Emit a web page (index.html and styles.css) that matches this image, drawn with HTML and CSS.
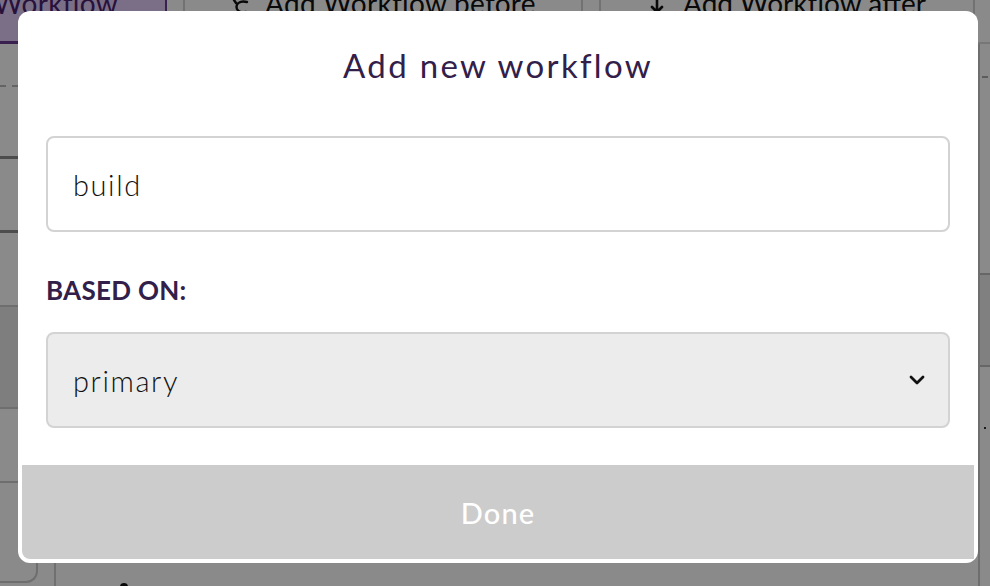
FILE: index.html
```html
<!DOCTYPE html>
<html lang="en">
<head>
<meta charset="utf-8">
<title>Add new workflow</title>
<link rel="stylesheet" href="styles.css">
</head>
<body>
<div class="page">
  <header class="toolbar">
    <div class="tab"><span class="tab-label">Workflow</span></div>
    <div class="spacer"></div>
    <div class="tool tool-before">
      <svg class="tool-icon" width="20" height="16" viewBox="0 0 20 16"><path d="M3 0 L5 3 M16 2 C9 0 4 4 6 9 C7.5 12 11 13 15 12" fill="none" stroke="#111" stroke-width="2.4" stroke-linecap="round"/></svg>
      <span class="tool-label">Add Workflow before</span>
    </div>
    <div class="tool tool-after">
      <svg class="tool-arrow" width="16" height="14" viewBox="0 0 16 14"><path d="M8 -4 L8 12 M3 7 L8 12 L13 7" fill="none" stroke="#111" stroke-width="2.6" stroke-linecap="round" stroke-linejoin="round"/></svg>
      <span class="tool-label">Add Workflow after</span>
    </div>
    <div class="rest"></div>
  </header>
  <div class="content">
    <aside class="side">
      <div class="row row-a"><span class="dash"></span></div>
      <div class="row row-b"></div>
      <div class="row row-c"></div>
      <div class="row row-d"></div>
      <div class="row row-e"></div>
      <div class="row row-f"></div>
      <div class="row row-g"><div class="card-corner"></div></div>
    </aside>
    <main class="main">
      <div class="main-foot"><span class="dot"></span></div>
    </main>
    <aside class="rside">
      <div class="r-row r-a"><span class="r-dash"></span></div>
      <div class="r-row r-b"></div>
      <div class="r-row r-c"></div>
      <div class="r-row r-d"><span class="r-dot"></span></div>
    </aside>
  </div>
</div>

<div class="overlay"></div>

<div class="modal" role="dialog" aria-labelledby="modal-title">
  <div class="modal-body">
    <h2 class="modal-title" id="modal-title">Add new workflow</h2>
    <input class="field" type="text" value="build" aria-label="Workflow name">
    <div class="field-label">BASED ON:</div>
    <div class="select" role="combobox" aria-expanded="false">
      <span class="select-value">primary</span>
      <svg class="chevron" width="16" height="12" viewBox="0 0 16 12"><path d="M2 3 L8 9 L14 3" fill="none" stroke="#111" stroke-width="2.8" stroke-linecap="round" stroke-linejoin="round"/></svg>
    </div>
  </div>
  <button class="done" type="button">Done</button>
</div>
</body>
</html>
```

FILE: styles.css
```css
* { box-sizing: border-box; }

html, body {
  margin: 0;
  height: 100%;
  overflow: hidden;
}

body {
  font-family: Lato, "Open Sans", "Liberation Sans", sans-serif;
  background: #ffffff;
  color: #111;
}

/* ---------- background page ---------- */
.page {
  display: flex;
  flex-direction: column;
  height: 100%;
}

.toolbar {
  display: flex;
  height: 44px;
  flex: none;
}

.tab {
  width: 167px;
  background: #e4cdfa;
  border-right: 2px solid #6a3b92;
  border-bottom: 3px solid #6a3b92;
  display: flex;
  justify-content: flex-end;
  padding-right: 47px;
  overflow: hidden;
}

.tab-label, .tool-label {
  font-size: 28px;
  line-height: 28px;
  margin-top: -11px;
  white-space: nowrap;
  letter-spacing: 0.3px;
}

.tab-label { color: #4a2270; }

.spacer {
  width: 16px;
  border-bottom: 2px solid #dddddd;
}

.tool {
  display: flex;
  gap: 14px;
  border-left: 2px solid #d2d2d2;
  border-right: 2px solid #d2d2d2;
  border-bottom: 2px solid #dddddd;
  overflow: hidden;
}

.tool-before {
  width: 400px;
  padding-left: 46px;
}

.tool-icon { flex: none; }

.tool-after {
  width: 376px;
  margin-left: 16px;
  padding-left: 48px;
  gap: 18px;
}

.tool-after .tool-label { letter-spacing: 0; }

.tool-arrow { flex: none; }

.rest {
  flex: 1;
  border-bottom: 2px solid #dddddd;
}

.content {
  flex: 1;
  display: flex;
}

.side {
  width: 56px;
  display: flex;
  flex-direction: column;
  border-right: 2px solid #cfcfcf;
}

.row { flex: none; }
.row-a { height: 43px; position: relative; }
.row-a .dash {
  position: absolute;
  left: 0; bottom: 0;
  width: 18px;
  border-bottom: 2px dashed #b9b9b9;
}
.row-b { height: 72px; border-bottom: 3px solid #8f8f8f; }
.row-c { height: 74px; border-bottom: 3px solid #8f8f8f; }
.row-d { height: 74px; border-bottom: 2px solid #cccccc; }
.row-e { height: 102px; background: #e9e9e9; border-bottom: 2px solid #cccccc; }
.row-f { height: 74px; border-bottom: 2px solid #cccccc; }
.row-g { flex: 1; }
.card-corner {
  width: 38px;
  height: 100px;
  border-right: 2px solid #cccccc;
  border-bottom: 2px solid #cccccc;
  border-bottom-right-radius: 12px;
}

.main {
  flex: 1;
  display: flex;
  flex-direction: column;
  justify-content: flex-end;
}

.main-foot { padding-left: 64px; height: 3px; }
.dot {
  display: block;
  width: 8px; height: 8px;
  border-radius: 50%;
  background: #111;
}

.rside {
  width: 12px;
  display: flex;
  flex-direction: column;
  border-left: 2px solid #cccccc;
}
.r-row { flex: none; }
.r-a { height: 229px; padding-top: 32px; padding-left: 2px; }
.r-dash { display: block; width: 6px; border-top: 2px solid #aaa; }
.r-b { height: 2px; background: #bdbdbd; }
.r-c { height: 92px; background: #ececec; border-bottom: 2px solid #bdbdbd; }
.r-d { padding-top: 60px; padding-left: 4px; }
.r-dot { display: block; width: 2px; height: 2px; background: #333; }

/* ---------- overlay ---------- */
.overlay {
  position: fixed;
  inset: 0;
  background: rgba(0, 0, 0, 0.46);
}

/* ---------- modal ---------- */
.modal {
  position: fixed;
  left: 18px;
  top: 11px;
  width: 960px;
  background: #ffffff;
  border-radius: 12px;
  padding: 0 4px 4px;
  display: flex;
  flex-direction: column;
}

.modal-body {
  padding: 34px 24px 37px;
  display: flex;
  flex-direction: column;
}

.modal-title {
  margin: 0 0 51px;
  text-align: center;
  font-size: 33px;
  line-height: 40px;
  font-weight: 400;
  letter-spacing: 2.3px;
  color: #32204a;
}

.field {
  display: block;
  width: 100%;
  height: 96px;
  border: 2px solid #d3d3d3;
  border-radius: 8px;
  padding: 0 25px;
  font-family: Lato, "Open Sans", "Liberation Sans", sans-serif;
  font-size: 29px;
  font-weight: 300;
  letter-spacing: 1.6px;
  color: #111;
  background: #fff;
  outline: none;
}

.field-label {
  margin-top: 42px;
  font-size: 26px;
  line-height: 32px;
  font-weight: 700;
  color: #32204a;
  letter-spacing: 0.3px;
}

.select {
  margin-top: 26px;
  height: 96px;
  border: 2px solid #d3d3d3;
  border-radius: 8px;
  background: #ececec;
  padding: 0 25px;
  display: flex;
  align-items: center;
  justify-content: space-between;
}

.select-value {
  font-size: 29px;
  font-weight: 300;
  letter-spacing: 1.6px;
  color: #111;
}

.chevron { margin-right: -2px; }

.done {
  height: 94px;
  border: 0;
  border-radius: 0 0 0 8px;
  background: #cccccc;
  color: #ffffff;
  font-family: Lato, "Open Sans", "Liberation Sans", sans-serif;
  font-size: 29px;
  font-weight: 500;
  letter-spacing: 1.2px;
  cursor: default;
}
```
